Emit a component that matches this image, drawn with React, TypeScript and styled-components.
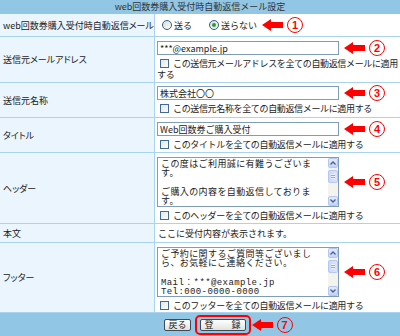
import React from 'react'
import styled, { createGlobalStyle } from 'styled-components'

const GlobalStyle = createGlobalStyle`
  body{
    margin:0;
    background:#fff;
    font-family:"Noto Sans CJK JP","Liberation Sans",sans-serif;
  }
`

const Page = styled.div`
  width:400px;
  height:336px;
  overflow:hidden;
  display:flex;
  flex-direction:column;
  font-size:9px;
  color:#222;
  font-family:"Noto Sans CJK JP","Liberation Sans",sans-serif;
`

const TitleBar = styled.div`
  flex:none;
  height:14px;
  line-height:14px;
  background:#92c6e5;
  text-align:center;
  color:#333;
`

const Row = styled.div<{ $h: number }>`
  flex:none;
  box-sizing:border-box;
  height:${p => p.$h}px;
  display:flex;
  border-bottom:1px solid #a9d3ee;
`

const Label = styled.div`
  flex:none;
  box-sizing:border-box;
  width:155px;
  background:#eaf5fd;
  border-right:1px solid #a9d3ee;
  padding:0 3px;
  display:flex;
  align-items:center;
  white-space:nowrap;
  font-feature-settings:"palt";
`

const Value = styled.div<{ $pad?: string; $center?: boolean }>`
  flex:1;
  min-width:0;
  padding:${p => p.$pad ?? '3px 0 0 2px'};
  line-height:11px;
  display:${p => (p.$center ? 'flex' : 'block')};
  align-items:center;
`

const Line = styled.div`
  display:flex;
  align-items:center;
  gap:4px;
`

const Input = styled.input`
  box-sizing:border-box;
  width:182px;
  height:14px;
  border:1px solid #7f9db9;
  padding:0 2px;
  font:9px "Noto Sans CJK JP","Liberation Sans",sans-serif;
  color:#222;
  background:#fff;
  outline:none;
`

const CheckLine = styled.div`
  margin-top:3px;
  line-height:11px;
  white-space:pre;
  letter-spacing:-0.35px;
`

const Box = styled.span`
  display:inline-block;
  box-sizing:border-box;
  width:9px;
  height:9px;
  margin:0 4px 0 3px;
  vertical-align:-1px;
  border:1px solid #3f6b95;
  background:linear-gradient(135deg,#e6e6e0,#fbfbf9);
`

const RadioGroup = styled.div`
  display:flex;
  align-items:center;
  height:11px;
`

const Option = styled.span<{ $last?: boolean }>`
  display:inline-flex;
  align-items:center;
  margin-left:5px;
  margin-right:${p => (p.$last ? '4px' : '12px')};
`

const Radio = styled.span<{ $on?: boolean }>`
  position:relative;
  box-sizing:border-box;
  width:10px;
  height:10px;
  margin-right:2px;
  border-radius:50%;
  border:1px solid #2d5d8e;
  background:linear-gradient(135deg,#dcdcd6,#fdfdfc);
  &::after{
    content:'';
    display:${p => (p.$on ? 'block' : 'none')};
    position:absolute;
    left:2px;
    top:2px;
    width:4px;
    height:4px;
    border-radius:50%;
    background:#27a12a;
  }
`

const TextArea = styled.div`
  box-sizing:border-box;
  width:182px;
  height:50px;
  border:1px solid #7f9db9;
  display:flex;
  background:#fff;
`

const TextBody = styled.div`
  flex:1;
  padding:3px 3px 0;
  white-space:pre;
  overflow:hidden;
  font-family:"Liberation Mono","Noto Sans CJK JP",monospace;
  font-size:9px;
  letter-spacing:0.4px;
  line-height:9.2px;
`

const ScrollBar = styled.div`
  width:10px;
  display:flex;
  flex-direction:column;
  background:#f4f3ee;
`

const ScrollBtn = styled.div`
  box-sizing:border-box;
  height:10px;
  border:1px solid #b5c8f3;
  border-radius:2px;
  background:linear-gradient(#e3ebfd,#c2d3fb);
  display:flex;
  align-items:center;
  justify-content:center;
`

const Thumb = styled.div`
  box-sizing:border-box;
  height:13px;
  margin-top:2px;
  border:1px solid #b5c8f3;
  border-radius:2px;
  background:linear-gradient(90deg,#c9d8fc,#dbe5fd);
  display:flex;
  align-items:center;
  justify-content:center;
`

const Grip = styled.span`
  width:4px;
  height:5px;
  background:repeating-linear-gradient(#eef3ff 0 1px,#8fa8dd 1px 2px);
`

const Track = styled.div`
  flex:1;
`

const Badge = styled.span`
  flex:none;
  box-sizing:border-box;
  width:16px;
  height:16px;
  border:1.6px solid #f00;
  border-radius:50%;
  color:#f00;
  font:bold 11px "Liberation Sans",sans-serif;
  display:flex;
  align-items:center;
  justify-content:center;
`

const MarkWrap = styled.span`
  display:inline-flex;
  align-items:center;
  gap:4px;
  height:12px;
  margin-left:1px;
`

const FooterBar = styled.div`
  flex:1;
  background:#92c6e5;
  display:flex;
  align-items:center;
  justify-content:center;
  gap:4px;
  padding-left:15px;
`

const Button = styled.button<{ $wide?: boolean }>`
  box-sizing:border-box;
  height:12px;
  padding:0 ${p => (p.$wide ? '4px' : '3px')};
  border:1px solid #3d4a5c;
  border-radius:2px;
  background:linear-gradient(#ffffff,#e2e2dc);
  font:9px/10px "Noto Sans CJK JP",sans-serif;
  color:#222;
  cursor:pointer;
`

const Frame = styled.span`
  position:relative;
  display:inline-flex;
  padding:2px 3px;
  border:2px solid #f00;
  border-radius:5px;
`

const FrameMark = styled.span`
  position:absolute;
  left:calc(100% + 2px);
  top:50%;
  transform:translateY(-50%);
  display:flex;
`

const Arrow = () => (
  <svg width="21" height="12" viewBox="0 0 21 12">
    <polygon points="0,6 9,0 9,3 21,3 21,9 9,9 9,12" fill="#f00" />
  </svg>
)

const Mark = ({ n }: { n: number }) => (
  <MarkWrap>
    <Arrow />
    <Badge>{n}</Badge>
  </MarkWrap>
)

const Chevron = ({ down }: { down?: boolean }) => (
  <svg width="6" height="4" viewBox="0 0 6 4">
    <polyline
      points={down ? '0.5,0.5 3,3 5.5,0.5' : '0.5,3.5 3,1 5.5,3.5'}
      fill="none"
      stroke="#4d6185"
      strokeWidth="1.3"
    />
  </svg>
)

const FakeTextArea = ({ text }: { text: string }) => (
  <TextArea>
    <TextBody>{text}</TextBody>
    <ScrollBar>
      <ScrollBtn><Chevron /></ScrollBtn>
      <Thumb><Grip /></Thumb>
      <Track />
      <ScrollBtn><Chevron down /></ScrollBtn>
    </ScrollBar>
  </TextArea>
)

const Check = ({ text }: { text: string }) => (
  <CheckLine>
    <Box />
    {text}
  </CheckLine>
)

const headerText = 'この度はご利用誠に有難うございま\nす。\n\nご購入の内容を自動返信しておりま\nす。'
const footerText = 'ご予約に関するご質問等ございまし\nら、お気軽にご連絡ください。\n\nMail：***@example.jp\nTel:000-0000-0000'

const App = () => {
  return (
    <Page>
      <GlobalStyle />
      <TitleBar>web回数券購入受付時自動返信メール設定</TitleBar>

      <Row $h={23}>
        <Label>web回数券購入受付時自動返信メール</Label>
        <Value $pad="0 0 0 2px" $center>
          <RadioGroup>
            <Option><Radio />送る</Option>
            <Option $last><Radio $on />送らない</Option>
            <Mark n={1} />
          </RadioGroup>
        </Value>
      </Row>

      <Row $h={46}>
        <Label>送信元メールアドレス</Label>
        <Value $pad="4px 0 0 2px">
          <Line>
            <Input defaultValue="***@example.jp" readOnly />
            <Mark n={2} />
          </Line>
          <Check text={'この送信元メールアドレスを全ての自動返信メールに適用\nする'} />
        </Value>
      </Row>

      <Row $h={35}>
        <Label>送信元名称</Label>
        <Value>
          <Line>
            <Input defaultValue="株式会社〇〇" readOnly />
            <Mark n={3} />
          </Line>
          <Check text="この送信元名称を全ての自動返信メールに適用する" />
        </Value>
      </Row>

      <Row $h={35}>
        <Label>タイトル</Label>
        <Value $pad="4px 0 0 2px">
          <Line>
            <Input defaultValue="Web回数券ご購入受付" readOnly />
            <Mark n={4} />
          </Line>
          <Check text="このタイトルを全ての自動返信メールに適用する" />
        </Value>
      </Row>

      <Row $h={71}>
        <Label>ヘッダー</Label>
        <Value $pad="4px 0 0 2px">
          <Line>
            <FakeTextArea text={headerText} />
            <Mark n={5} />
          </Line>
          <Check text="このヘッダーを全ての自動返信メールに適用する" />
        </Value>
      </Row>

      <Row $h={19}>
        <Label>本文</Label>
        <Value $pad="4px 0 0 3px">ここに受付内容が表示されます。</Value>
      </Row>

      <Row $h={70}>
        <Label>フッター</Label>
        <Value $pad="4px 0 0 2px">
          <Line>
            <FakeTextArea text={footerText} />
            <Mark n={6} />
          </Line>
          <Check text="このフッターを全ての自動返信メールに適用する" />
        </Value>
      </Row>

      <FooterBar>
        <Button>戻る</Button>
        <Frame>
          <Button $wide>登　　録</Button>
          <FrameMark><Mark n={7} /></FrameMark>
        </Frame>
      </FooterBar>
    </Page>
  )
}

export default App
